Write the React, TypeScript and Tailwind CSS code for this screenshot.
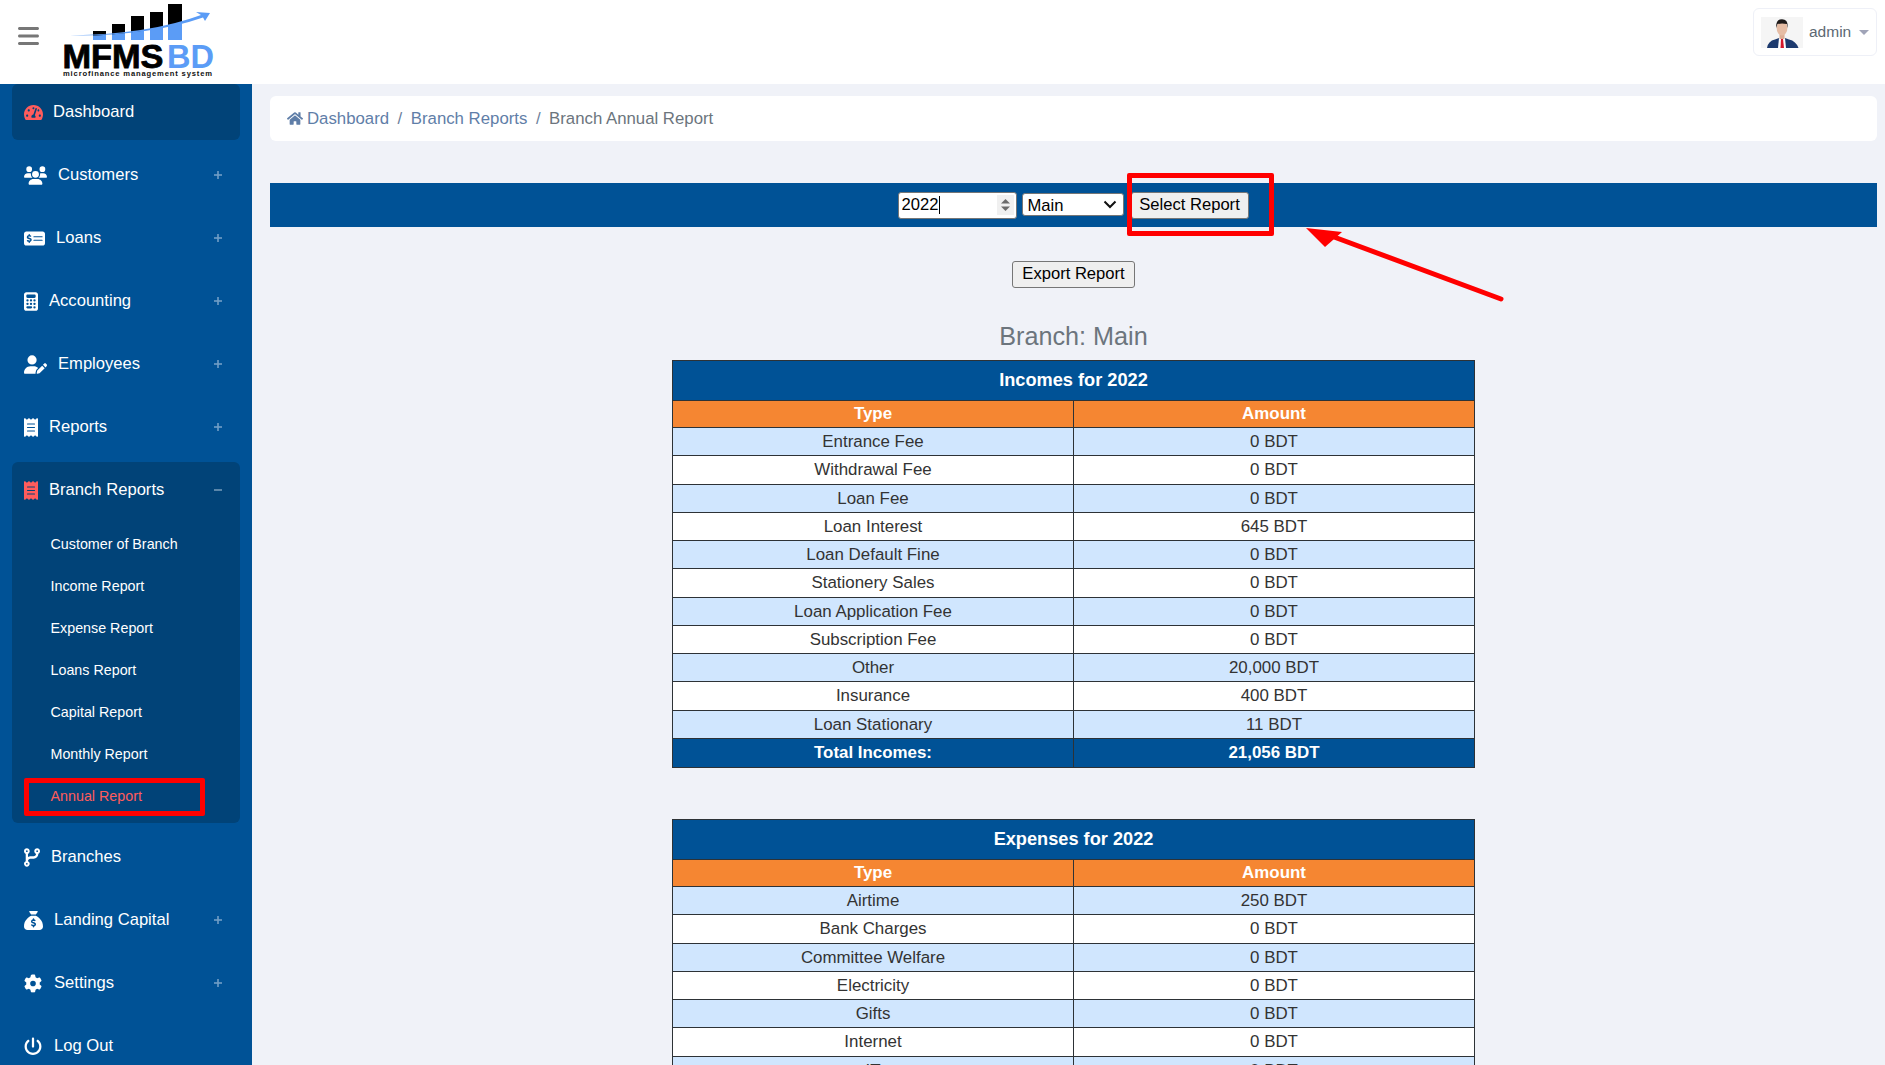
import { FaHome, FaTachometerAlt } from 'react-icons/fa'
import { FaBars, FaCalculator, FaCodeBranch, FaGear, FaMoneyCheckDollar, FaPowerOff, FaReceipt, FaSackDollar, FaUserPen, FaUsers } from 'react-icons/fa6'
import type { ComponentType } from 'react'

type NavItem = {
  label: string
  icon: ComponentType<{ className?: string }>
  iconClass: string
  gap: string
  plus?: boolean
}

const topItems: NavItem[] = [
  { label: 'Customers', icon: FaUsers, iconClass: 'w-[23px] h-[19px]', gap: 'ml-[11px]', plus: true },
  { label: 'Loans', icon: FaMoneyCheckDollar, iconClass: 'w-[21px] h-[19px]', gap: 'ml-[11px]', plus: true },
  { label: 'Accounting', icon: FaCalculator, iconClass: 'w-[14px] h-[19px]', gap: 'ml-[11px]', plus: true },
  { label: 'Employees', icon: FaUserPen, iconClass: 'w-[23px] h-[19px]', gap: 'ml-[11px]', plus: true },
  { label: 'Reports', icon: FaReceipt, iconClass: 'w-[14px] h-[19px]', gap: 'ml-[11px]', plus: true },
]

const bottomItems: NavItem[] = [
  { label: 'Branches', icon: FaCodeBranch, iconClass: 'w-[16px] h-[19px]', gap: 'ml-[11px]' },
  { label: 'Landing Capital', icon: FaSackDollar, iconClass: 'w-[19px] h-[19px]', gap: 'ml-[11px]', plus: true },
  { label: 'Settings', icon: FaGear, iconClass: 'w-[18px] h-[19px]', gap: 'ml-[12px]', plus: true },
  { label: 'Log Out', icon: FaPowerOff, iconClass: 'w-[18px] h-[19px]', gap: 'ml-[12px]' },
]

const subItems = ['Customer of Branch', 'Income Report', 'Expense Report', 'Loans Report', 'Capital Report', 'Monthly Report']

const incomes = [
  ['Entrance Fee', '0 BDT'],
  ['Withdrawal Fee', '0 BDT'],
  ['Loan Fee', '0 BDT'],
  ['Loan Interest', '645 BDT'],
  ['Loan Default Fine', '0 BDT'],
  ['Stationery Sales', '0 BDT'],
  ['Loan Application Fee', '0 BDT'],
  ['Subscription Fee', '0 BDT'],
  ['Other', '20,000 BDT'],
  ['Insurance', '400 BDT'],
  ['Loan Stationary', '11 BDT'],
]

const expenses = [
  ['Airtime', '250 BDT'],
  ['Bank Charges', '0 BDT'],
  ['Committee Welfare', '0 BDT'],
  ['Electricity', '0 BDT'],
  ['Gifts', '0 BDT'],
  ['Internet', '0 BDT'],
  ['IT', '0 BDT'],
]

function Logo() {
  const bars = [
    [93, 31, 13],
    [112, 24, 13],
    [131, 16, 13],
    [150, 12, 13],
    [168, 4, 14],
  ]
  return (
    <svg width="160" height="80" viewBox="60 0 160 80" className="block">
      <defs>
        <clipPath id="under-swoosh">
          <path d="M70 36 Q150 36 206 14 L206 41 L70 41 Z" />
        </clipPath>
      </defs>
      {bars.map(([x, y, w]) => (
        <rect key={x} x={x} y={y} width={w} height={40 - y} fill="#000" />
      ))}
      <g clipPath="url(#under-swoosh)">
        {bars.map(([x, y, w]) => (
          <rect key={x} x={x} y={y} width={w} height={40 - y} fill="#5b9cf6" />
        ))}
      </g>
      <path d="M70 35.5 Q150 34 201 15 L196 12 L210 13 L205 21 L203 17.5 Q150 36 70 35.5 Z" fill="#5b9cf6" />
      <text x="62.5" y="67.5" textLength="101" lengthAdjust="spacingAndGlyphs" fontFamily="'Liberation Sans', Arial, sans-serif" fontWeight="700" fontSize="33" stroke="#000" strokeWidth="0.8" fill="#000">MFMS</text>
      <text x="167" y="67.5" textLength="47" lengthAdjust="spacingAndGlyphs" fontFamily="'Liberation Sans', Arial, sans-serif" fontWeight="700" fontSize="33" fill="#5b9cf6">BD</text>
      <text x="63" y="76" textLength="149" lengthAdjust="spacing" fontFamily="'Liberation Sans', Arial, sans-serif" fontWeight="700" fontSize="7.6" fill="#111">microfinance management system</text>
    </svg>
  )
}

function Avatar() {
  return (
    <svg width="42" height="31" viewBox="0 0 42 31" className="block">
      <rect width="42" height="31" fill="#f5f5f5" />
      <path d="M6 31 Q7 24 14 22.5 L18 21 L24 21 L28 22.5 Q35 24 37.5 31 Z" fill="#1d3a6e" />
      <path d="M18 21 L24 21 L25 31 L17 31 Z" fill="#fff" />
      <path d="M20 22 L22 22 L23 31 L19.5 31 Z" fill="#d5182b" />
      <rect x="18.5" y="16" width="5" height="6" fill="#dcae95" />
      <ellipse cx="21" cy="11" rx="5.4" ry="7.5" fill="#e6bda5" />
      <path d="M15.2 11 Q14.6 2.2 21 2.2 Q27.4 2.2 26.8 11 L25.8 7 Q21 6 16.4 7 Z" fill="#1e1a1a" />
    </svg>
  )
}

function PlusMark({ minus }: { minus?: boolean }) {
  return (
    <svg width="8" height="8" viewBox="0 0 8 8" className="block opacity-50">
      <rect x="0" y="3.2" width="8" height="1.6" fill="#dfe9f5" />
      {!minus && <rect x="3.2" y="0" width="1.6" height="8" fill="#dfe9f5" />}
    </svg>
  )
}

function NavRow({ item }: { item: NavItem }) {
  const Icon = item.icon
  return (
    <div className="flex h-14 mb-[7px] items-center pl-3 pr-[18px] text-[16.6px] text-white">
      <Icon className={`${item.iconClass} shrink-0`} />
      <span className={item.gap}>{item.label}</span>
      {item.plus && (
        <span className="ml-auto">
          <PlusMark />
        </span>
      )}
    </div>
  )
}

function ReportTable({ title, rows, total }: { title: string; rows: string[][]; total?: string[] }) {
  return (
    <table className="w-[803px] table-fixed border-collapse text-center text-[16.9px] text-[#333]">
      <tbody>
        <tr className="h-10 bg-[#005296] text-[18.2px] text-white">
          <th colSpan={2} className="border border-[#2d3236] font-bold">{title}</th>
        </tr>
        <tr className="h-[27px] bg-[#f58632] text-white">
          <th className="border border-[#2d3236] font-bold">Type</th>
          <th className="border border-[#2d3236] font-bold">Amount</th>
        </tr>
        {rows.map(([name, amount], i) => (
          <tr key={name} className={`${i % 4 === 1 ? 'h-[29px]' : 'h-7'} ${i % 2 === 0 ? 'bg-[#d0e6fe]' : 'bg-white'}`}>
            <td className="border border-[#2d3236] p-0">{name}</td>
            <td className="border border-[#2d3236] p-0">{amount}</td>
          </tr>
        ))}
        {total && (
          <tr className="h-[29px] bg-[#005296] text-white font-bold">
            <td className="border border-[#2d3236] p-0">{total[0]}</td>
            <td className="border border-[#2d3236] p-0">{total[1]}</td>
          </tr>
        )}
      </tbody>
    </table>
  )
}

export default function App() {
  return (
    <div className="flex h-screen flex-col overflow-hidden bg-[#f0f2f8] font-['Liberation_Sans',Arial,sans-serif]">
      {/* Barra superior */}
      <header className="flex h-[84px] shrink-0 items-start bg-white">
        <FaBars className="ml-[18px] mt-[24px] h-6 w-[21px] text-[#777]" />
        <div className="ml-[21px]">
          <Logo />
        </div>
        <div className="ml-auto mr-2 mt-2 flex h-12 w-[124px] items-center rounded-[6px] border border-[#eef0f7] pl-[7px]">
          <Avatar />
          <span className="ml-[6px] text-[15.5px] text-[#5c6873]">admin</span>
          <span className="ml-[8px] h-0 w-0 border-x-[5px] border-t-[5px] border-x-transparent border-t-[#a0a4b8]" />
        </div>
      </header>

      <div className="flex min-h-0 flex-1">
        {/* Menu lateral */}
        <aside className="w-[252px] shrink-0 bg-[#005296] px-3">
          <div className="mb-[7px] flex h-14 items-center rounded-md bg-[#014378] pl-3 text-[16.6px] text-white">
            <FaTachometerAlt className="h-[19px] w-[19px] text-[#ff5c5c]" />
            <span className="ml-[10px]">Dashboard</span>
          </div>
          {topItems.map((item) => (
            <NavRow key={item.label} item={item} />
          ))}
          <div className="mb-[6px] rounded-md bg-[#014378] pb-[5px]">
            <div className="mb-[6px] flex h-14 items-center pl-3 pr-[18px] text-[16.6px] text-white">
              <FaReceipt className="h-[19px] w-[14px] text-[#ff5c5c]" />
              <span className="ml-[11px]">Branch Reports</span>
              <span className="ml-auto">
                <PlusMark minus />
              </span>
            </div>
            {subItems.map((label) => (
              <div key={label} className="flex h-[42px] items-center pl-[38.5px] text-[14.3px] text-white">
                {label}
              </div>
            ))}
            <div className="relative flex h-[42px] items-center pl-[38.5px] text-[14.3px] text-[#ff5c5c]">
              Annual Report
              <div className="absolute left-3 top-[2px] h-[38px] w-[181px] rounded-[2px] border-[5px] border-[#ff0000]" />
            </div>
          </div>
          {bottomItems.map((item) => (
            <NavRow key={item.label} item={item} />
          ))}
        </aside>

        {/* Contenido */}
        <main className="min-w-0 flex-1 pl-[18px] pr-2">
          <nav className="mt-3 flex h-[45px] items-center rounded-md bg-white pl-[17px] text-[16.8px] text-[#6c7f9c]">
            <FaHome className="h-[15px] w-[16px] text-[#5f7ea8]" />
            <span className="ml-[4px] text-[#5f7ea8]">Dashboard</span>
            <span className="mx-[8.5px] text-[#6c7f9c]">/</span>
            <span className="text-[#5f7ea8]">Branch Reports</span>
            <span className="mx-[8.5px] text-[#6c7f9c]">/</span>
            <span className="text-[#6c757d]">Branch Annual Report</span>
          </nav>

          <div className="relative mt-[42px] flex h-11 items-center justify-center bg-[#005296] pr-px text-[16.6px] text-black">
            <div className="relative">
              <input
                type="number"
                defaultValue={2022}
                className="block h-[27px] w-[119px] rounded-[3px] border border-[#767676] bg-white pl-[3px] pr-[2px] [&::-webkit-inner-spin-button]:appearance-none"
              />
              <span className="absolute left-[41px] top-[4px] h-[18px] w-px bg-black" />
              <svg width="17" height="20" viewBox="0 0 17 20" className="absolute right-[3px] top-[3.5px]">
                <rect width="17" height="20" fill="#f0f0f0" />
                <path d="M8.5 4 L13 8.5 L4 8.5 Z" fill="#6b6b6b" />
                <path d="M8.5 16 L13 11.5 L4 11.5 Z" fill="#6b6b6b" />
              </svg>
            </div>
            <div className="relative mb-px ml-[5px]">
              <select className="block h-[23px] w-[102px] appearance-none rounded-[3px] border border-[#767676] bg-white pl-[5px]">
                <option>Main</option>
              </select>
              <svg width="14" height="9" viewBox="0 0 14 9" fill="none" className="pointer-events-none absolute right-[7px] top-[7px]">
                <path d="M1.5 1.5 L7 7 L12.5 1.5" stroke="#111" strokeWidth="2" />
              </svg>
            </div>
            <div className="relative ml-[7px]">
              <button className="block h-[27px] w-[118px] rounded-[3px] border border-[#767676] bg-[#efefef]">Select Report</button>
              <div className="absolute left-[-4px] top-[-19px] h-[63px] w-[147px] rounded-[2px] border-[5px] border-[#ff0000]" />
            </div>
            <svg width="210" height="84" viewBox="0 0 210 84" className="absolute left-[1030px] top-[40px]">
              <path d="M201 76 L26 11" stroke="#ff0000" strokeWidth="5" strokeLinecap="round" />
              <path d="M6 5 L42 9 L25 24 Z" fill="#ff0000" />
            </svg>
          </div>

          <div className="mt-[34px] flex justify-center">
            <button className="h-[27px] w-[123px] rounded-[3px] border border-[#767676] bg-[#efefef] text-[16.6px] text-black">Export Report</button>
          </div>

          <h2 className="mt-[30px] mb-[4px] h-[38px] text-center text-[25.2px] leading-[37px] font-normal text-[#6c757d]">Branch: Main</h2>

          <div className="flex justify-center">
            <ReportTable title="Incomes for 2022" rows={incomes} total={['Total Incomes:', '21,056 BDT']} />
          </div>
          <div className="mt-[51px] flex justify-center">
            <ReportTable title="Expenses for 2022" rows={expenses} />
          </div>
        </main>
      </div>
    </div>
  )
}
